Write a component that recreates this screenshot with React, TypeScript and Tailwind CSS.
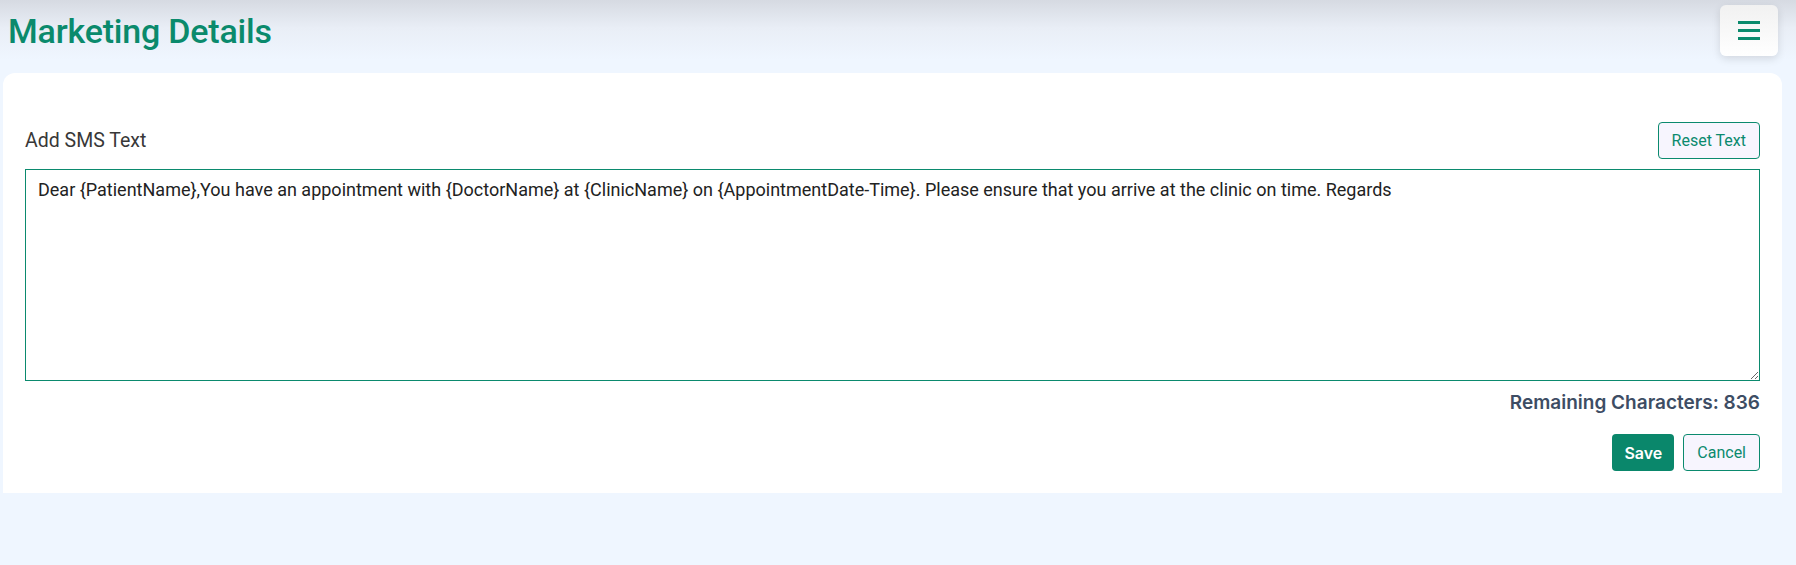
import React, { useState } from 'react';

const DEFAULT_TEXT =
  'Dear {PatientName},You have an appointment with {DoctorName} at {ClinicName} on {AppointmentDate-Time}. Please ensure that you arrive at the clinic on time. Regards';

const MAX_CHARS = 1000;

export default function App() {
  const [text, setText] = useState(DEFAULT_TEXT);
  const remaining = MAX_CHARS - text.length;

  return (
    <div className="w-full h-[565px] bg-[#eff6ff] font-['Roboto',sans-serif]">
      {/* header */}
      <div className="h-[73px] flex justify-between items-start pl-2 pr-[18px] pt-[5px] bg-[linear-gradient(to_bottom,#d6dae2_0px,#e9eef6_28px,#eff6ff_60px)]">
        <h1 className="mt-[6px] text-[34px] leading-[40px] font-medium text-[#0a8a6c] tracking-[-0.2px]">
          Marketing Details
        </h1>
        <button className="w-[58px] h-[51px] rounded-md bg-[linear-gradient(to_bottom,#f1f1f1,#ffffff)] shadow-[0_3px_8px_rgba(0,0,0,0.12)] flex items-center justify-center">
          <svg width="22" height="19" viewBox="0 0 22 19" fill="#0a8a6c">
            <rect x="0" y="0" width="22" height="3" />
            <rect x="0" y="8" width="22" height="3" />
            <rect x="0" y="16" width="22" height="3" />
          </svg>
        </button>
      </div>

      {/* card */}
      <div className="ml-[3px] mr-[14px] bg-white rounded-t-xl px-[22px] pt-[49px] pb-[22px]">
        <div className="flex justify-between items-center">
          <span className="text-[19.5px] text-[#383838]">Add SMS Text</span>
          <button
            onClick={() => setText(DEFAULT_TEXT)}
            className="h-[37px] px-[13px] rounded border border-[#0b8a6e] bg-[#f7f5fe] text-[16px] text-[#0b8a6e]"
          >
            Reset Text
          </button>
        </div>

        <textarea
          value={text}
          onChange={(e) => setText(e.target.value)}
          className="mt-[10px] block w-full h-[212px] border border-[#0b8a6e] px-3 pt-[8px] text-[18px] leading-6 text-[#222] font-['Roboto',sans-serif] outline-none"
        />

        <div className="mt-[10px] text-right text-[19px] leading-6 font-semibold text-[#3d4d64] font-['Inter',sans-serif]">
          Remaining Characters: {remaining}
        </div>

        <div className="mt-[19px] flex justify-end gap-[9px]">
          <button className="h-[37px] px-[12px] rounded bg-[#0a876b] text-white text-[16px] font-semibold font-['Inter',sans-serif]">
            Save
          </button>
          <button className="h-[37px] px-[13px] rounded border border-[#0b8a6e] bg-[#f7f5fe] text-[16px] text-[#0b8a6e]">
            Cancel
          </button>
        </div>
      </div>
    </div>
  );
}
